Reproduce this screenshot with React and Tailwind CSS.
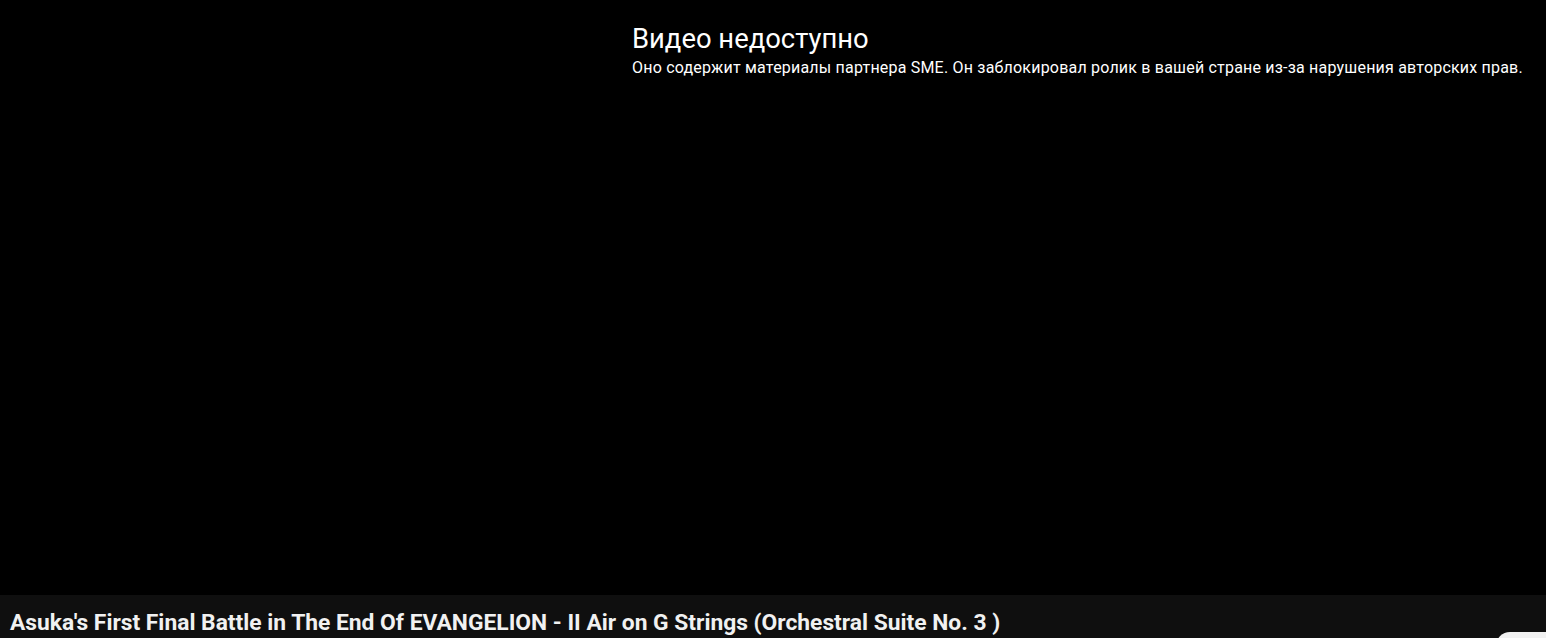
export default function App() {
  return (
    <div className="w-[1546px] h-[638px] overflow-hidden bg-[#0f0f0f] font-['Roboto',sans-serif]">
      {/* Плеер с сообщением об ошибке */}
      <div className="h-[595px] bg-black flex">
        <div className="pl-[632px] pt-[23px] text-white">
          <h1 className="text-[27.4px] leading-[32px] font-normal">Видео недоступно</h1>
          <p className="mt-[3px] text-[16px] leading-[20px] font-normal tracking-[0.2px]">
            Оно содержит материалы партнера SME. Он заблокировал ролик в вашей стране из-за нарушения авторских прав.
          </p>
        </div>
      </div>

      {/* Заголовок ролика */}
      <div className="flex items-start justify-between pl-[10px] pt-[14px]">
        <h2 className="text-[22.8px] leading-[28px] font-bold text-[#f1f1f1]">
          Asuka's First Final Battle in The End Of EVANGELION - II Air on G Strings (Orchestral Suite No. 3 )
        </h2>
        <div className="mt-[23px] w-[50px] h-[36px] rounded-tl-[14px] bg-[#f2f2f2]"></div>
      </div>
    </div>
  );
}
